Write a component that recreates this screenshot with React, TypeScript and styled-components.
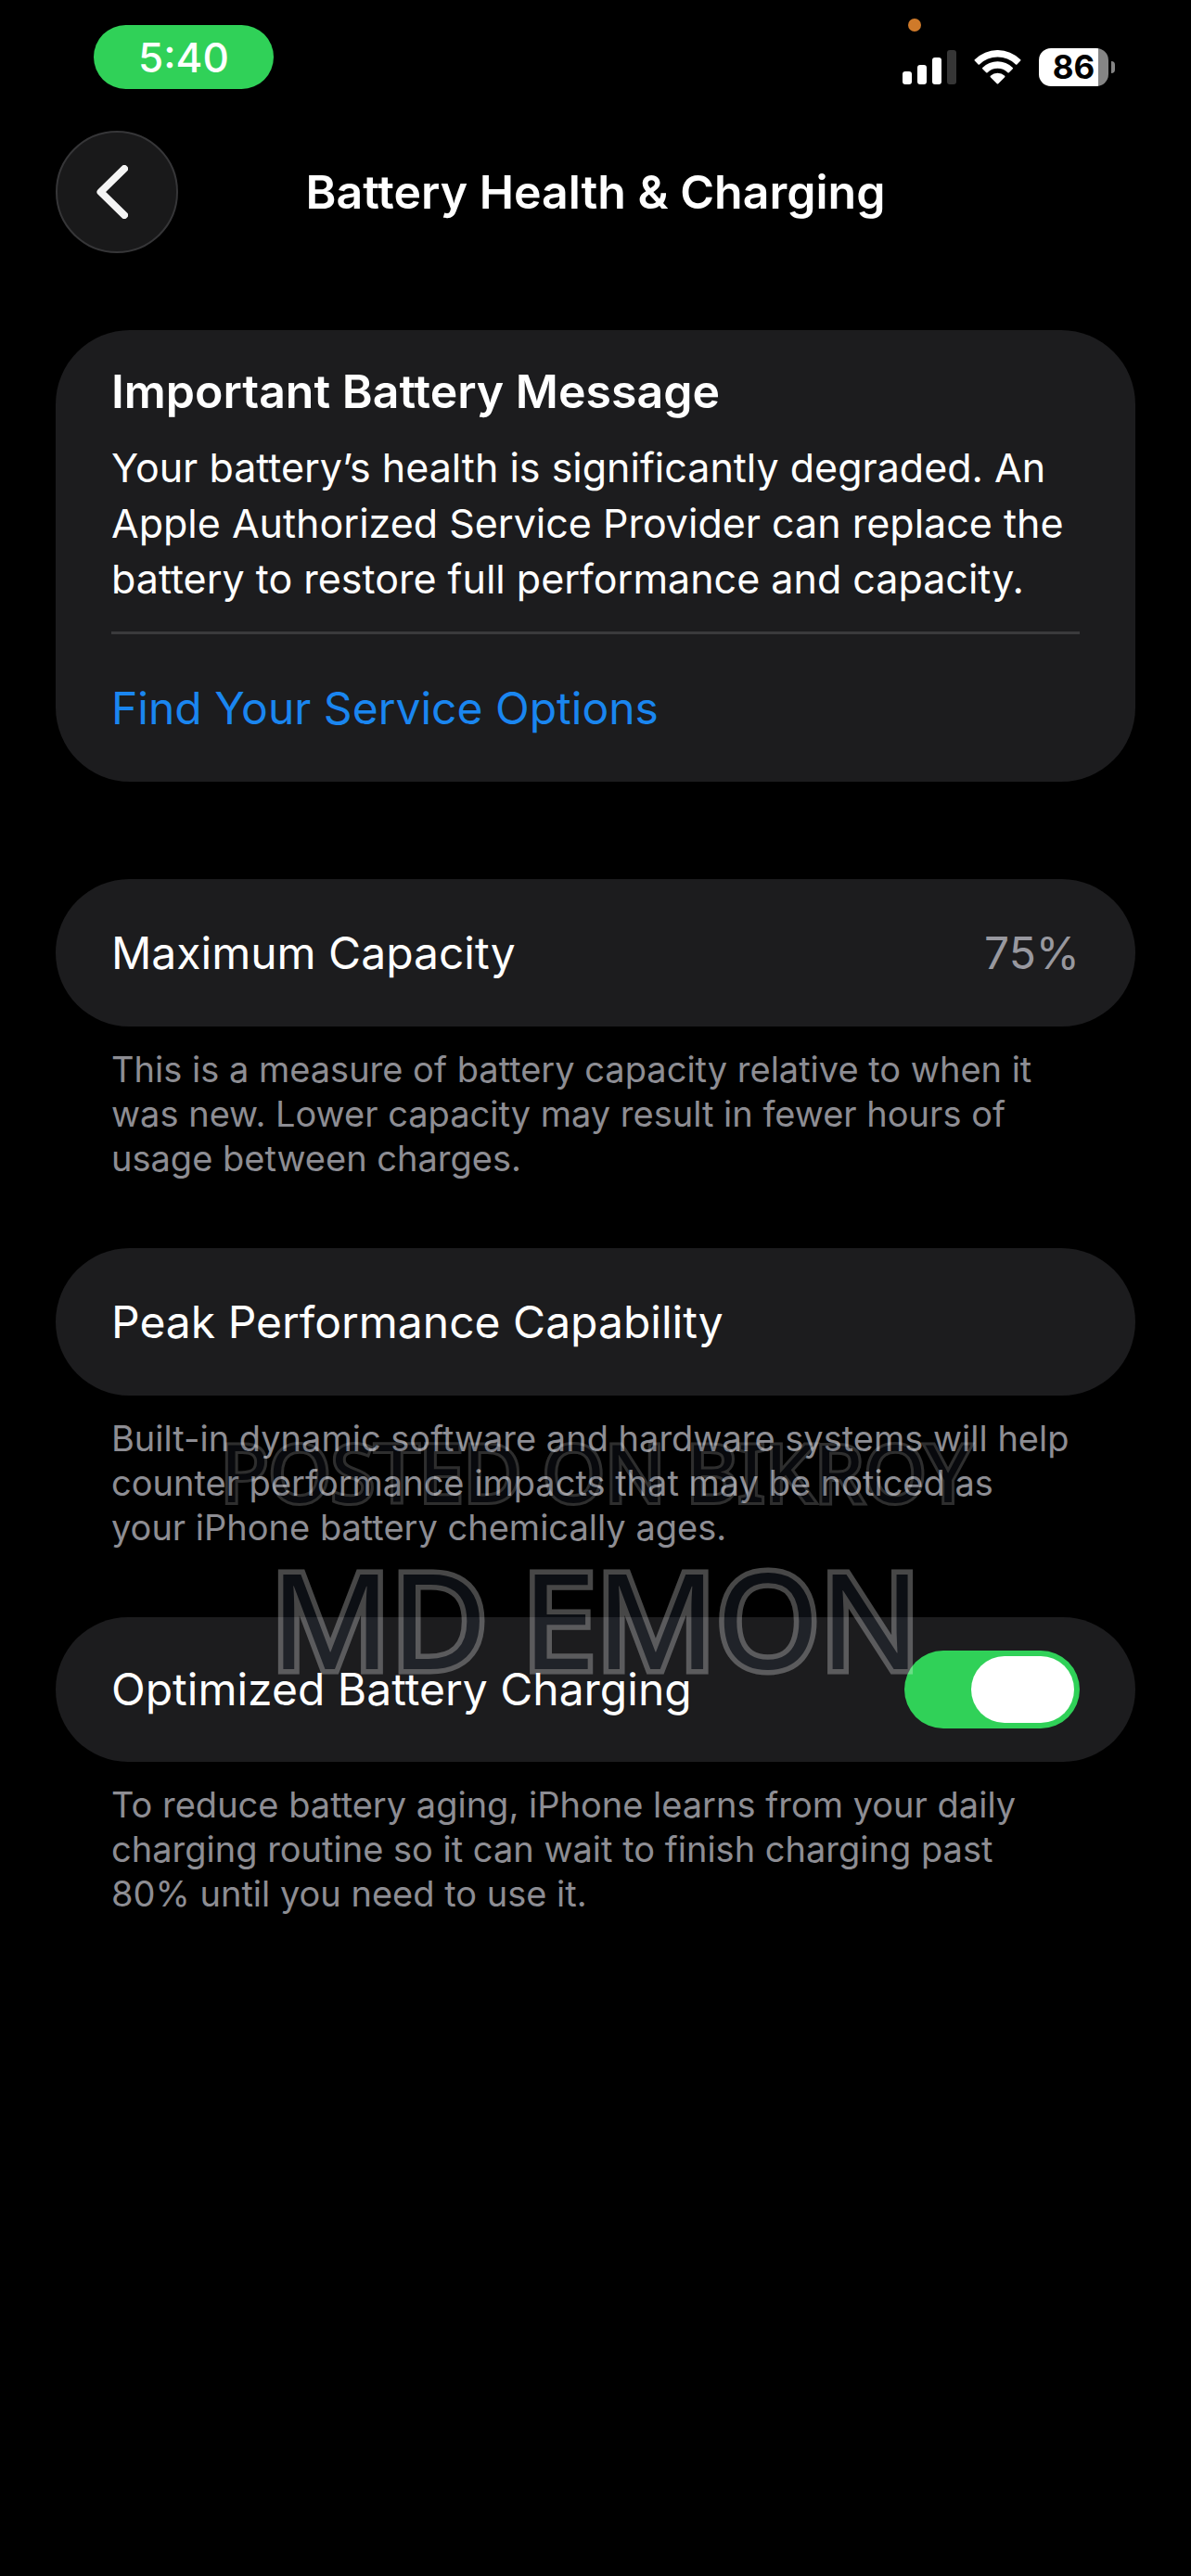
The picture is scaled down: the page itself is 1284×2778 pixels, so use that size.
import React, { useState } from "react";
import styled, { createGlobalStyle } from "styled-components";

const color = {
  background: "#000000",
  card: "#1c1c1e",
  text: "#ffffff",
  secondary: "#98989f",
  note: "#8d8d93",
  link: "#1a86f0",
  green: "#30d158",
  divider: "#3a3a3c",
};

const GlobalStyle = createGlobalStyle`
  *, *::before, *::after { box-sizing: border-box; }
  html, body { margin: 0; background: ${color.background}; }
  body {
    font-family: Inter, Roboto, "Liberation Sans", sans-serif;
    color: ${color.text};
    -webkit-font-smoothing: antialiased;
  }
  h1, h2, p { margin: 0; }
`;

const Page = styled.div`
  position: relative;
  padding-bottom: 80px;
`;

const StatusBar = styled.header`
  display: flex;
  justify-content: space-between;
  align-items: flex-end;
  padding: 27px 82px 0 101px;
`;

const TimePill = styled.time`
  display: grid;
  place-items: center;
  width: 194px;
  height: 69px;
  border-radius: 35px;
  background: ${color.green};
  font-size: 44px;
  font-weight: 500;
  line-height: 60px;
`;

const StatusIcons = styled.div`
  position: relative;
  display: flex;
  align-items: center;
  gap: 19px;
  height: 41px;
  margin-bottom: 3px;
`;

const MicDot = styled.span`
  position: absolute;
  left: 6px;
  top: -32px;
  width: 14px;
  height: 14px;
  border-radius: 50%;
  background: #cf7a2a;
`;

const BatteryIcon = styled.div`
  display: flex;
  align-items: center;
  gap: 3px;
`;

const BatteryBody = styled.div`
  display: grid;
  place-items: center;
  width: 75px;
  height: 41px;
  border-radius: 13px;
  background: linear-gradient(to right, #ffffff 86%, #858585 86%);
  color: #000000;
  font-size: 35px;
  font-weight: 700;
  line-height: 41px;
`;

const BatteryCap = styled.span`
  width: 4px;
  height: 13px;
  border-radius: 0 6px 6px 0;
  background: #858585;
`;

const NavBar = styled.nav`
  display: grid;
  grid-template-columns: 132px 1fr 132px;
  align-items: center;
  padding: 45px 60px 0;
`;

const BackButton = styled.button`
  display: grid;
  place-items: center;
  width: 132px;
  height: 132px;
  padding: 0 10px 0 0;
  border: 2px solid #363638;
  border-radius: 50%;
  background: #19191a;
  color: #f4f4f4;
  cursor: pointer;
`;

const Title = styled.h1`
  text-align: center;
  font-size: 50px;
  font-weight: 600;
  line-height: 60px;
`;

const Content = styled.main`
  display: flex;
  flex-direction: column;
  gap: 73px;
  padding: 83px 60px 0;
`;

const MessageCard = styled.section`
  margin-bottom: 32px;
  padding: 36px 60px 0;
  border-radius: 80px;
  background: ${color.card};
`;

const MessageHeading = styled.h2`
  font-size: 50px;
  font-weight: 600;
  line-height: 60px;
`;

const MessageText = styled.p`
  margin-top: 22px;
  padding-bottom: 27px;
  font-size: 43px;
  line-height: 60px;
`;

const LinkRow = styled.div`
  display: flex;
  align-items: center;
  height: 162px;
  border-top: 3px solid ${color.divider};
`;

const ServiceLink = styled.a`
  color: ${color.link};
  font-size: 48px;
  line-height: 60px;
  text-decoration: none;
`;

const Setting = styled.section`
  display: flex;
  flex-direction: column;
  gap: 22px;
`;

const Row = styled.div`
  display: flex;
  align-items: center;
  justify-content: space-between;
  min-height: 159px;
  padding: 0 60px;
  border-radius: 80px;
  background: ${color.card};
  font-size: 48px;
  line-height: 60px;
`;

const SwitchRow = styled(Row)`
  min-height: 156px;
`;

const RowValue = styled.span`
  color: ${color.secondary};
`;

const Note = styled.p`
  padding: 0 66px 0 60px;
  color: ${color.note};
  font-size: 38px;
  line-height: 48px;
`;

const Switch = styled.input`
  appearance: none;
  display: flex;
  align-items: center;
  width: 189px;
  height: 84px;
  margin: 0;
  padding: 6px;
  border-radius: 42px;
  background: #39393d;
  cursor: pointer;

  &::before {
    content: "";
    width: 111px;
    height: 72px;
    border-radius: 36px;
    background: #ffffff;
  }

  &:checked {
    justify-content: flex-end;
    background: ${color.green};
  }
`;

const Watermark = styled.div`
  position: absolute;
  top: 1527px;
  left: 0;
  right: 0;
  color: #2c3648;
  text-align: center;
  font-family: "Noto Sans", "Open Sans", sans-serif;
  paint-order: stroke fill;
  pointer-events: none;
`;

const WatermarkSite = styled.p`
  opacity: 0.18;
  -webkit-text-stroke: 6px #ffffff;
  font-size: 86px;
  line-height: 120px;
`;

const WatermarkName = styled.p`
  margin-top: 8px;
  opacity: 0.28;
  -webkit-text-stroke: 11px #ffffff;
  font-size: 143px;
  line-height: 180px;
`;

function SignalIcon() {
  return (
    <svg width="58" height="37" viewBox="0 0 58 37" aria-hidden="true">
      <rect x="0" y="23" width="10" height="14" rx="3" fill="#fff" />
      <rect x="16" y="16" width="10" height="21" rx="3" fill="#fff" />
      <rect x="32" y="8" width="10" height="29" rx="3" fill="#fff" />
      <rect x="48" y="0" width="10" height="37" rx="3" fill="#363636" />
    </svg>
  );
}

function WifiIcon() {
  return (
    <svg width="51" height="37" viewBox="0 0 51 37" aria-hidden="true">
      <path
        d="M0.8 10.2 A35 35 0 0 1 50.2 10.2 Q50.8 10.9 50.2 11.6 L46.4 15.4 Q45.7 16 45 15.4 A28 28 0 0 0 6 15.4 Q5.3 16 4.6 15.4 L0.8 11.6 Q0.2 10.9 0.8 10.2 Z"
        fill="#fff"
      />
      <path
        d="M9.2 18.9 A23.4 23.4 0 0 1 41.8 18.9 Q42.4 19.6 41.8 20.2 L37.8 24.2 Q37.1 24.8 36.4 24.2 A15.8 15.8 0 0 0 14.6 24.2 Q13.9 24.8 13.2 24.2 L9.2 20.2 Q8.6 19.6 9.2 18.9 Z"
        fill="#fff"
      />
      <path
        d="M17.8 27.8 A11.4 11.4 0 0 1 33.2 27.8 Q33.8 28.5 33.2 29.2 L26.2 36.2 Q25.5 36.9 24.8 36.2 L17.8 29.2 Q17.2 28.5 17.8 27.8 Z"
        fill="#fff"
      />
    </svg>
  );
}

function ChevronLeftIcon() {
  return (
    <svg width="34" height="58" viewBox="0 0 34 58" aria-hidden="true">
      <path
        d="M30 4 L4.5 29 L30 54"
        fill="none"
        stroke="currentColor"
        strokeWidth="8"
        strokeLinecap="round"
        strokeLinejoin="round"
      />
    </svg>
  );
}

export default function App() {
  const [optimized, setOptimized] = useState(true);

  return (
    <>
      <GlobalStyle />
      <Page>
        <StatusBar>
          <TimePill>5:40</TimePill>
          <StatusIcons>
            <MicDot />
            <SignalIcon />
            <WifiIcon />
            <BatteryIcon>
              <BatteryBody>86</BatteryBody>
              <BatteryCap />
            </BatteryIcon>
          </StatusIcons>
        </StatusBar>

        <NavBar>
          <BackButton type="button" aria-label="Back">
            <ChevronLeftIcon />
          </BackButton>
          <Title>Battery Health &amp; Charging</Title>
        </NavBar>

        <Content>
          <MessageCard>
            <MessageHeading>Important Battery Message</MessageHeading>
            <MessageText>
              Your battery’s health is significantly degraded. An Apple
              Authorized Service Provider can replace the battery to restore
              full performance and capacity.
            </MessageText>
            <LinkRow>
              <ServiceLink href="#service">Find Your Service Options</ServiceLink>
            </LinkRow>
          </MessageCard>

          <Setting>
            <Row>
              <span>Maximum Capacity</span>
              <RowValue>75%</RowValue>
            </Row>
            <Note>
              This is a measure of battery capacity relative to when it was new.
              Lower capacity may result in fewer hours of usage between charges.
            </Note>
          </Setting>

          <Setting>
            <Row>
              <span>Peak Performance Capability</span>
            </Row>
            <Note>
              Built-in dynamic software and hardware systems will help counter
              performance impacts that may be noticed as your iPhone battery
              chemically ages.
            </Note>
          </Setting>

          <Setting>
            <SwitchRow>
              <label htmlFor="optimized-charging">Optimized Battery Charging</label>
              <Switch
                id="optimized-charging"
                type="checkbox"
                checked={optimized}
                onChange={(event) => setOptimized(event.target.checked)}
              />
            </SwitchRow>
            <Note>
              To reduce battery aging, iPhone learns from your daily charging
              routine so it can wait to finish charging past 80% until you need
              to use it.
            </Note>
          </Setting>
        </Content>

        <Watermark>
          <WatermarkSite>POSTED ON BIKROY</WatermarkSite>
          <WatermarkName>MD EMON</WatermarkName>
        </Watermark>
      </Page>
    </>
  );
}
